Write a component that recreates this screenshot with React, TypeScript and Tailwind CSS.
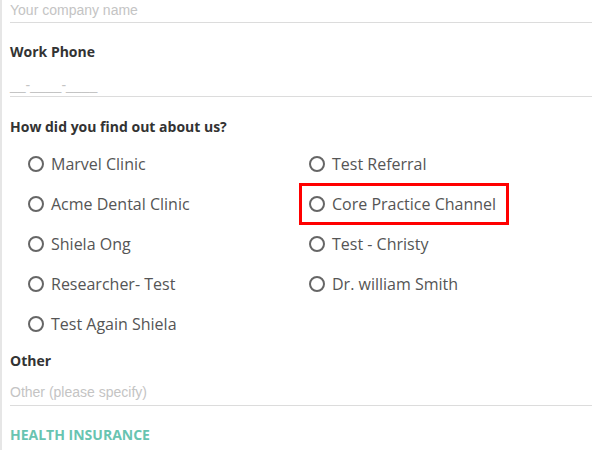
const options: { label: string; highlight?: boolean }[] = [
  { label: "Marvel Clinic" },
  { label: "Test Referral" },
  { label: "Acme Dental Clinic" },
  { label: "Core Practice Channel", highlight: true },
  { label: "Shiela Ong" },
  { label: "Test - Christy" },
  { label: "Researcher- Test" },
  { label: "Dr. william Smith" },
  { label: "Test Again Shiela" },
];

const Radio = ({ label, highlight }: { label: string; highlight?: boolean }) => (
  <div className="h-10 flex items-center">
    <label
      className={`inline-flex items-center gap-[7px] h-[42px] pl-[7px] pr-[10px] border-[3px] cursor-pointer ${
        highlight ? "border-[#ff0000]" : "border-transparent"
      }`}
    >
      <span className="w-4 h-4 rounded-full border-2 border-[#666] bg-white shrink-0"></span>
      <span className="text-[16px] text-[#555] font-['Open_Sans',sans-serif] leading-none">{label}</span>
    </label>
  </div>
);

export default function App() {
  return (
    <div className="w-[600px] h-[450px] bg-white overflow-hidden">
      <div className="h-full border-l-2 border-[#e6e6e6] pl-2 w-[592px] flex flex-col">
        {/* Company name */}
        <div className="h-[23px] border-b border-[#dcdcdc] flex items-start">
          <span className="text-[14px] leading-[20px] text-[#c4c4c4] font-['Liberation_Sans',Arial,sans-serif]">
            Your company name
          </span>
        </div>

        {/* Work phone */}
        <div className="mt-[19px] text-[14px] leading-5 font-bold text-[#333] font-['Open_Sans',sans-serif]">
          Work Phone
        </div>
        <div className="mt-[11px] h-6 border-b border-[#dcdcdc] flex items-center">
          <span className="text-[14px] leading-5 text-[#c4c4c4] font-['Liberation_Sans',Arial,sans-serif]">
            __-____-____
          </span>
        </div>

        {/* How did you find out */}
        <div className="mt-5 text-[14px] leading-5 font-bold text-[#333] font-['Open_Sans',sans-serif]">
          How did you find out about us?
        </div>
        <div className="mt-[7px] ml-2 grid grid-cols-[281px_281px]">
          {options.map((o) => (
            <Radio key={o.label} label={o.label} highlight={o.highlight} />
          ))}
        </div>

        {/* Other */}
        <div className="mt-[7px] text-[14px] leading-5 font-bold text-[#333] font-['Open_Sans',sans-serif]">
          Other
        </div>
        <div className="mt-2 h-[27px] border-b border-[#dcdcdc] flex items-center">
          <span className="text-[14px] leading-5 text-[#c4c4c4] font-['Liberation_Sans',Arial,sans-serif]">
            Other (please specify)
          </span>
        </div>

        <div className="mt-[19px] text-[14px] leading-5 font-bold text-[#68c4b1] font-['Open_Sans',sans-serif]">
          HEALTH INSURANCE
        </div>
      </div>
    </div>
  );
}
